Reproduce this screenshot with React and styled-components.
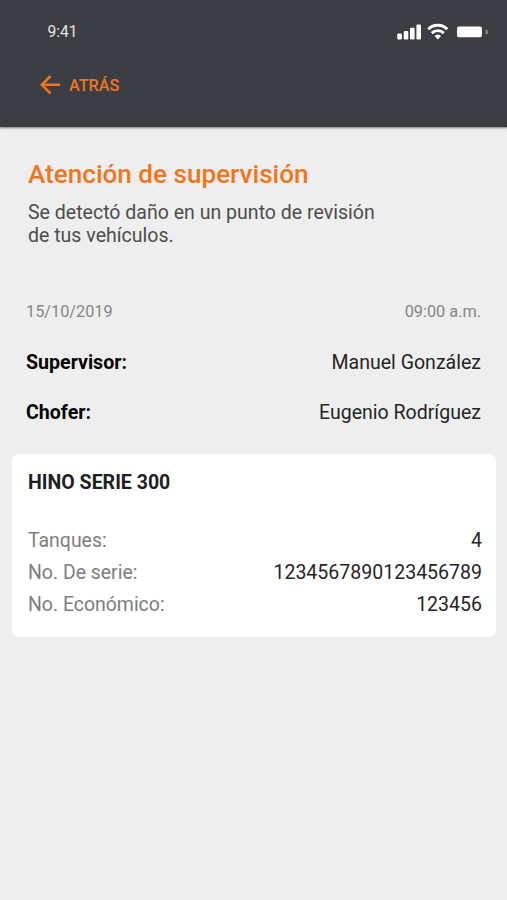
import React from "react";
import styled, { createGlobalStyle } from "styled-components";

const GlobalStyle = createGlobalStyle`
  * { box-sizing: border-box; }
  body { margin: 0; background: #eeeeee; font-family: Roboto, sans-serif; }
`;
const Screen = styled.main`
  display: flex;
  flex-direction: column;
  min-height: 900px;
  background: #eeeeee;
`;
const Header = styled.header`
  height: 127px;
  padding: 22px 19px 0 40px;
  background: #3b3e42;
  box-shadow: 0 1px 2px rgba(0, 0, 0, 0.5);
`;
const StatusBar = styled.div`
  display: flex;
  justify-content: space-between;
  align-items: center;
  height: 20px;
  padding-left: 7.5px;
`;
const Clock = styled.span`
  color: #e4e4e5;
  font-size: 15.6px;
  line-height: 20px;
`;
const StatusIcons = styled.svg`
  display: block;
  width: 91px;
  height: 20px;
`;
const BackButton = styled.button`
  display: flex;
  align-items: center;
  gap: 9px;
  height: 24px;
  margin-top: 31px;
  padding: 0;
  border: 0;
  background: none;
  color: #f0761e;
  font: 500 16.2px/24px Roboto, sans-serif;
`;
const BackText = styled.span`
  padding-top: 1px;
`;
const Arrow = styled.svg`
  width: 20px;
  height: 20px;
`;
const Intro = styled.section`
  padding: 31px 28px 0;
`;
const Title = styled.h1`
  margin: 0;
  color: #f0761e;
  font-size: 26.1px;
  font-weight: 500;
  line-height: 32px;
`;
const Description = styled.p`
  margin: 11px 0 0;
  color: #4d4d4d;
  font-size: 19.55px;
  line-height: 23px;
`;
const Details = styled.section`
  padding: 54px 26px 0;
`;
const Row = styled.div`
  display: flex;
  justify-content: space-between;
  align-items: center;
  height: ${({ $height }) => $height}px;
`;
const Meta = styled.span`
  color: #858585;
  font-size: 16.3px;
`;
const Label = styled.span`
  color: ${({ $strong }) => ($strong ? "#060606" : "#7d7d7d")};
  font-size: ${({ $strong }) => ($strong ? 19.6 : 19.45)}px;
  font-weight: ${({ $strong }) => ($strong ? 700 : 400)};
`;
const Value = styled.span`
  color: #252525;
  font-size: 19.55px;
`;
const Card = styled.section`
  height: 183px;
  margin: 32px 11px 0 12px;
  padding: 13px 14px 0 16px;
  border-radius: 7px;
  background: #ffffff;
`;
const CardTitle = styled.h2`
  margin: 0 0 26px;
  color: #202020;
  font-size: 19.55px;
  font-weight: 700;
  line-height: 31px;
`;

export default function App() {
  return (
    <Screen>
      <GlobalStyle />
      <Header>
        <StatusBar>
          <Clock>9:41</Clock>
          <StatusIcons viewBox="0 0 91 20" fill="#fff">
            <rect x="0.3" y="11.6" width="4.6" height="5.9" rx="1.2" />
            <rect x="6.7" y="8.9" width="4.6" height="8.6" rx="1.2" />
            <rect x="13" y="5.8" width="4.6" height="11.7" rx="1.2" />
            <rect x="19.4" y="2.5" width="4.6" height="15" rx="1.2" />
            <g fill="none" stroke="#fff" strokeWidth="2.9">
              <path d="M31.3 7.2a13.5 13.5 0 0 1 19 0" />
              <path d="M34.8 11.1a8.5 8.5 0 0 1 12 0" />
            </g>
            <path d="M37.5 14.1a4.8 4.8 0 0 1 6.6 0L40.8 17.5Z" />
            <rect x="60" y="4.5" width="25" height="10.8" rx="1.8" />
            <path d="M88.5 7.5a2.5 2.5 0 0 1 0 5Z" fill="#85878a" />
          </StatusIcons>
        </StatusBar>
        <BackButton>
          <Arrow viewBox="0 0 20 20" fill="none" stroke="currentColor" strokeWidth="2.6">
            <path d="M20 9.8H2M10.5 1.1L1.8 9.8L10.5 18.5" />
          </Arrow>
          <BackText>ATRÁS</BackText>
        </BackButton>
      </Header>
      <Intro>
        <Title>Atención de supervisión</Title>
        <Description>Se detectó daño en un punto de revisión<br />de tus vehículos.</Description>
      </Intro>
      <Details>
        <Row $height={20}><Meta>15/10/2019</Meta><Meta>09:00 a.m.</Meta></Row>
        <Row $height={82}><Label $strong>Supervisor:</Label><Value>Manuel González</Value></Row>
        <Row $height={19}><Label $strong>Chofer:</Label><Value>Eugenio Rodríguez</Value></Row>
      </Details>
      <Card>
        <CardTitle>HINO SERIE 300</CardTitle>
        <Row $height={32}><Label>Tanques:</Label><Value>4</Value></Row>
        <Row $height={32}><Label>No. De serie:</Label><Value>1234567890123456789</Value></Row>
        <Row $height={32}><Label>No. Económico:</Label><Value>123456</Value></Row>
      </Card>
    </Screen>
  );
}
